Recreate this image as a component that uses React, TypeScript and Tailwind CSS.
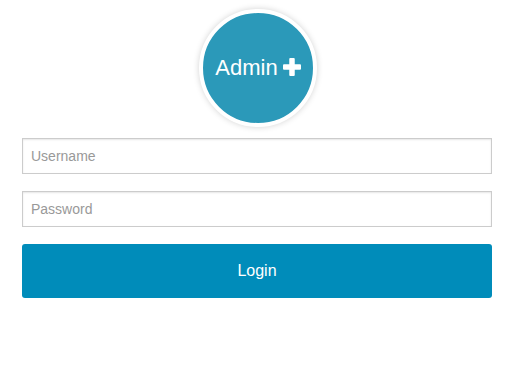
import React from "react";

export default function App() {
  return (
    <div className="min-h-screen bg-white font-['Liberation_Sans',Arial,sans-serif]">
      <div className="w-[470px] ml-[22px] pt-[9px]">
        <div className="flex justify-center pl-[2px]">
          <div className="w-[118px] h-[118px] rounded-full border-4 border-white bg-[#2b99b9] shadow-[0_0_6px_rgba(0,0,0,0.18)] flex items-center justify-center text-white">
            <span className="text-[22px] leading-none">Admin</span>
            <svg className="ml-[5px] mb-[2px]" width="18" height="18" viewBox="0 0 18 18">
              <rect x="6.25" y="0" width="5.5" height="18" rx="1" fill="white" />
              <rect x="0" y="6.25" width="18" height="5.5" rx="1" fill="white" />
            </svg>
          </div>
        </div>

        <div className="mt-[11px] flex flex-col gap-[17px]">
          <input
            type="text"
            placeholder="Username"
            className="h-[36px] w-full border border-[#cccccc] bg-white px-[8px] text-[14px] text-[#333] placeholder:text-[#999] shadow-[inset_0_1px_2px_rgba(0,0,0,0.1)] outline-none"
          />
          <input
            type="password"
            placeholder="Password"
            className="h-[36px] w-full border border-[#cccccc] bg-white px-[8px] text-[14px] text-[#333] placeholder:text-[#999] shadow-[inset_0_1px_2px_rgba(0,0,0,0.1)] outline-none"
          />
          <button className="h-[54px] w-full rounded-[3px] bg-[#008cba] text-white text-[16px]">
            Login
          </button>
        </div>
      </div>
    </div>
  );
}
